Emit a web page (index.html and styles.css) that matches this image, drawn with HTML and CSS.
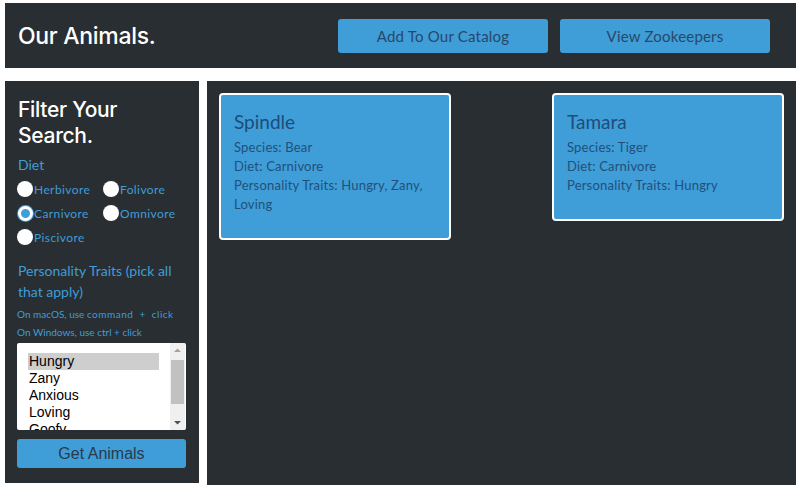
FILE: index.html
```html
<!DOCTYPE html>
<html>
<head>
<meta charset="utf-8">
<link rel="stylesheet" href="styles.css">
</head>
<body>
<header class="topbar">
  <h1 class="brand">Our Animals.</h1>
  <nav class="actions">
    <button class="btn">Add To Our Catalog</button>
    <button class="btn">View Zookeepers</button>
  </nav>
</header>
<div class="layout">
  <aside class="sidebar">
    <h2 class="side-title">Filter Your Search.</h2>
    <div class="label">Diet</div>
    <div class="radios">
      <label class="radio"><span class="dot"></span><span>Herbivore</span></label>
      <label class="radio"><span class="dot"></span><span>Folivore</span></label>
      <label class="radio"><span class="dot checked"></span><span>Carnivore</span></label>
      <label class="radio"><span class="dot"></span><span>Omnivore</span></label>
      <label class="radio"><span class="dot"></span><span>Piscivore</span></label>
    </div>
    <div class="label traits">Personality Traits (pick all that apply)</div>
    <p class="hint">On macOS, use <code>command + click</code></p>
    <p class="hint">On Windows, use ctrl + click</p>
    <div class="listbox" role="listbox" aria-multiselectable="true">
      <div class="options">
        <div class="opt selected">Hungry</div>
        <div class="opt">Zany</div>
        <div class="opt">Anxious</div>
        <div class="opt">Loving</div>
        <div class="opt">Goofy</div>
      </div>
      <div class="scrollbar">
        <svg class="arrow" width="15" height="14" viewBox="0 0 15 14"><path d="M4 9 L7.5 5.5 L11 9 Z" fill="#a3a3a3"/></svg>
        <div class="thumb"></div>
        <div class="track-rest"></div>
        <svg class="arrow" width="15" height="14" viewBox="0 0 15 14"><path d="M4 5 L7.5 8.5 L11 5 Z" fill="#505050"/></svg>
      </div>
    </div>
    <button class="get-btn">Get Animals</button>
  </aside>
  <main class="results">
    <div class="card">
      <h3 class="card-title">Spindle</h3>
      <p>Species: Bear</p>
      <p>Diet: Carnivore</p>
      <p>Personality Traits: Hungry, Zany, Loving</p>
    </div>
    <div class="card">
      <h3 class="card-title">Tamara</h3>
      <p>Species: Tiger</p>
      <p>Diet: Carnivore</p>
      <p>Personality Traits: Hungry</p>
    </div>
  </main>
</div>
</body>
</html>
```
FILE: styles.css
```css
* { box-sizing: border-box; }
html, body { background: #ffffff; }
body {
  margin: 3px 6px 0 5px;
  font-family: "Lato", "Noto Sans", sans-serif;
}
.topbar {
  height: 65px;
  background: #292e32;
  display: flex;
  align-items: center;
  justify-content: space-between;
  padding: 0 26px 0 13px;
}
.brand {
  margin: 0;
  font-family: "Inter", sans-serif;
  font-weight: 500;
  font-size: 23px;
  color: #ffffff;
  letter-spacing: -0.3px;
}
.actions { display: flex; gap: 12px; }
.btn {
  width: 210px;
  height: 34px;
  border: none;
  border-radius: 3px;
  background: #3f9dd8;
  color: #26496a;
  font-family: "Lato", sans-serif;
  font-size: 15px;
  letter-spacing: 0.2px;
}
.layout {
  display: flex;
  gap: 8px;
  margin-top: 13px;
  align-items: flex-start;
}
.sidebar {
  width: 194px;
  height: 402px;
  background: #292e32;
  padding: 16px 12px 0 12px;
}
.side-title {
  margin: 0 0 0 1px;
  font-family: "Inter", sans-serif;
  font-weight: 500;
  font-size: 21px;
  line-height: 26px;
  color: #ffffff;
  letter-spacing: -0.3px;
}
.label {
  color: #3f9dd8;
  font-size: 14px;
  line-height: 20px;
  margin-top: 6px;
  padding-left: 1px;
}
.radios {
  display: grid;
  grid-template-columns: 86px 1fr;
  row-gap: 4px;
  margin-top: 4px;
}
.radio {
  display: flex;
  align-items: center;
  gap: 1px;
  height: 20px;
  color: #3f9dd8;
  font-size: 12px;
  letter-spacing: 0.4px;
}
.dot {
  width: 16px;
  height: 16px;
  border-radius: 50%;
  background: #ffffff;
  flex: none;
}
.dot.checked {
  background: #3f9dd8;
  border: 3px solid #ffffff;
  box-shadow: 0 0 0 1px #3f9dd8;
  width: 15px;
  height: 15px;
  margin-left: 1px;
}
.label.traits {
  margin-top: 13px;
  line-height: 21px;
}
.hint {
  margin: 5px 0 0 0;
  color: #3f9dd8;
  font-size: 10px;
  line-height: 14px;
}
.hint code {
  font-family: "Lato", sans-serif;
  letter-spacing: 0.5px;
  word-spacing: 3px;
}
.hint + .hint { margin-top: 4px; }
.listbox {
  display: flex;
  width: 169px;
  height: 87px;
  margin-top: 4px;
  border-radius: 2px;
  background: #fff;
  overflow: hidden;
}
.options {
  flex: 1;
  padding: 10px 0 0 11px;
  font-family: "Liberation Sans", Arial, sans-serif;
  font-size: 14px;
  color: #000;
}
.opt { height: 17px; line-height: 17px; padding-left: 1px; width: 131px; }
.opt.selected { background: #cecece; }
.scrollbar {
  width: 15px;
  margin-right: 1px;
  background: #f0f0f0;
  display: flex;
  flex-direction: column;
}
.arrow { display: block; flex: none; }
.thumb {
  height: 44px;
  margin: 3px 1px 0 1px;
  background: #c1c1c1;
}
.track-rest { flex: 1; }
.get-btn {
  display: block;
  width: 169px;
  height: 29px;
  margin-top: 9px;
  border: none;
  border-radius: 3px;
  background: #3f9dd8;
  color: #2a3a48;
  font-family: "Liberation Sans", Arial, sans-serif;
  font-size: 16px;
}
.results {
  flex: 1;
  height: 404px;
  background: #292e32;
  padding: 12px 12px;
  display: flex;
  justify-content: space-between;
  align-items: flex-start;
}
.card {
  width: 232px;
  background: #3f9dd8;
  border: 2px solid #ffffff;
  border-radius: 4px;
  padding: 15px 13px 24px 13px;
  color: #21507a;
}
.card-title {
  margin: 0 0 4px 0;
  font-weight: 400;
  font-size: 19px;
  line-height: 24px;
  color: #1d4d78;
}
.card p {
  margin: 0;
  font-size: 13px;
  line-height: 19px;
  letter-spacing: 0.2px;
}
```
